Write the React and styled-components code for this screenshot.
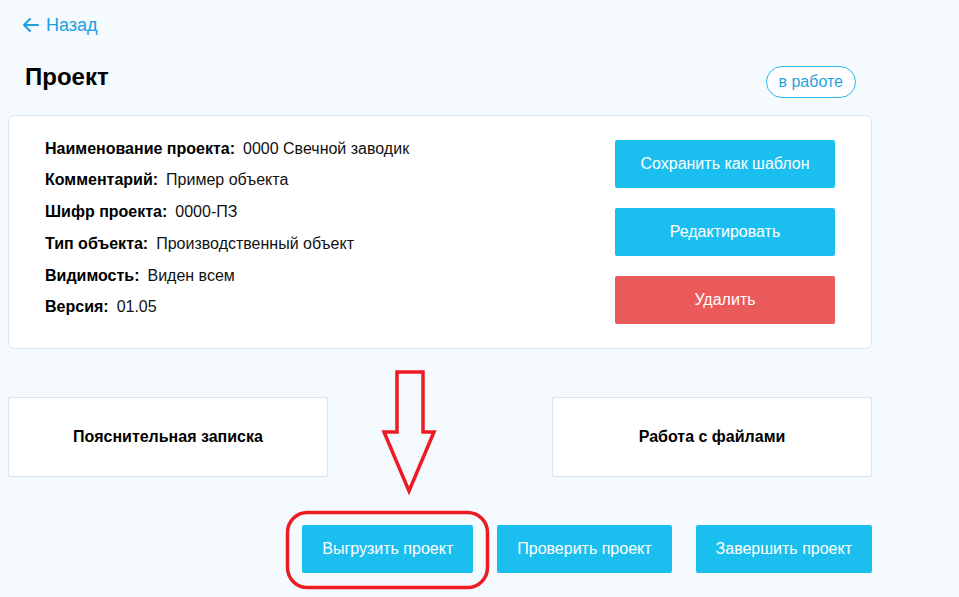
import styled, { createGlobalStyle } from "styled-components";

const GlobalStyle = createGlobalStyle`
  html, body {
    margin: 0;
    padding: 0;
    background: #f5faff;
    font-family: "Liberation Sans", Arial, sans-serif;
    color: #111;
  }
`;

const Page = styled.div`
  position: relative;
  width: 864px;
  min-height: 597px;
  padding: 0 0 0 8px;
`;

const BackLink = styled.a`
  display: inline-flex;
  align-items: center;
  gap: 7px;
  margin: 15px 0 0 14px;
  height: 20px;
  font-size: 18px;
  color: #1aa0df;
  text-decoration: none;
  cursor: pointer;
`;

const Header = styled.div`
  display: flex;
  justify-content: space-between;
  align-items: flex-start;
  margin-top: 26px;
  padding: 0 16px 0 17px;
`;

const Title = styled.h1`
  margin: 0;
  font-size: 24px;
  line-height: 28px;
  font-weight: bold;
  color: #000;
`;

const Badge = styled.span`
  margin-top: 3px;
  box-sizing: border-box;
  height: 32px;
  padding: 0 12px;
  display: inline-flex;
  align-items: center;
  border: 1px solid #2bb8ee;
  border-radius: 16px;
  background: #fff;
  color: #27a3dc;
  font-size: 16px;
`;

const Card = styled.div`
  margin-top: 17px;
  display: flex;
  justify-content: space-between;
  align-items: flex-start;
  padding: 24px 36px 24px 36px;
  background: #fff;
  border: 1px solid #e1e5ea;
  border-radius: 7px;
`;

const InfoList = styled.div`
  display: flex;
  flex-direction: column;
  gap: 13.8px;
  margin-top: -0.5px;
`;

const InfoRow = styled.div`
  font-size: 16px;
  line-height: 18px;
  color: #111;

  b {
    font-weight: bold;
    color: #000;
    margin-right: 8px;
  }
`;

const Actions = styled.div`
  display: flex;
  flex-direction: column;
  gap: 20px;
`;

const Button = styled.button`
  height: 48px;
  width: ${({ $wide }) => ($wide ? "220px" : "auto")};
  padding: 0 20px;
  border: none;
  border-radius: 2px;
  background: ${({ $danger }) => ($danger ? "#eb5a5a" : "#1bbfef")};
  color: #fff;
  font-family: "Liberation Sans", Arial, sans-serif;
  font-size: 16px;
  cursor: pointer;
`;

const Tiles = styled.div`
  display: flex;
  justify-content: space-between;
  margin-top: 48px;
`;

const Tile = styled.div`
  box-sizing: border-box;
  width: 320px;
  height: 80px;
  display: flex;
  align-items: center;
  justify-content: center;
  background: #fff;
  border: 1px solid #dfe3e8;
  border-radius: 2px;
  font-size: 16px;
  font-weight: bold;
  color: #000;
`;

const Footer = styled.div`
  display: flex;
  justify-content: flex-end;
  gap: 24px;
  margin-top: 48px;
`;

const Annotation = styled.svg`
  position: absolute;
  left: 0;
  top: 0;
  pointer-events: none;
`;

const info = [
  ["Наименование проекта:", "0000 Свечной заводик"],
  ["Комментарий:", "Пример объекта"],
  ["Шифр проекта:", "0000-ПЗ"],
  ["Тип объекта:", "Производственный объект"],
  ["Видимость:", "Виден всем"],
  ["Версия:", "01.05"],
];

export default function App() {
  return (
    <>
      <GlobalStyle />
      <Page>
        <BackLink>
          <svg width="17" height="16" viewBox="0 0 17 16" fill="none">
            <path
              d="M16 8H2M8 2L2 8l6 6"
              stroke="#1aa0df"
              strokeWidth="2"
              strokeLinecap="round"
              strokeLinejoin="round"
            />
          </svg>
          Назад
        </BackLink>

        <Header>
          <Title>Проект</Title>
          <Badge>в работе</Badge>
        </Header>

        <Card>
          <InfoList>
            {info.map(([label, value]) => (
              <InfoRow key={label}>
                <b>{label}</b>
                {value}
              </InfoRow>
            ))}
          </InfoList>
          <Actions>
            <Button $wide>Сохранить как шаблон</Button>
            <Button $wide>Редактировать</Button>
            <Button $wide $danger>
              Удалить
            </Button>
          </Actions>
        </Card>

        <Tiles>
          <Tile>Пояснительная записка</Tile>
          <Tile>Работа с файлами</Tile>
        </Tiles>

        <Footer>
          <Button>Выгрузить проект</Button>
          <Button>Проверить проект</Button>
          <Button>Завершить проект</Button>
        </Footer>

        <Annotation width="959" height="597" viewBox="0 0 959 597">
          <polygon
            points="397,372 423,372 423,432 434,432 409,491 384,432 397,432"
            fill="none"
            stroke="#ed1c24"
            strokeWidth="3.5"
            strokeLinejoin="miter"
          />
          <rect
            x="287.5"
            y="512.5"
            width="200"
            height="75"
            rx="20"
            fill="none"
            stroke="#ed1c24"
            strokeWidth="3.5"
          />
        </Annotation>
      </Page>
    </>
  );
}
